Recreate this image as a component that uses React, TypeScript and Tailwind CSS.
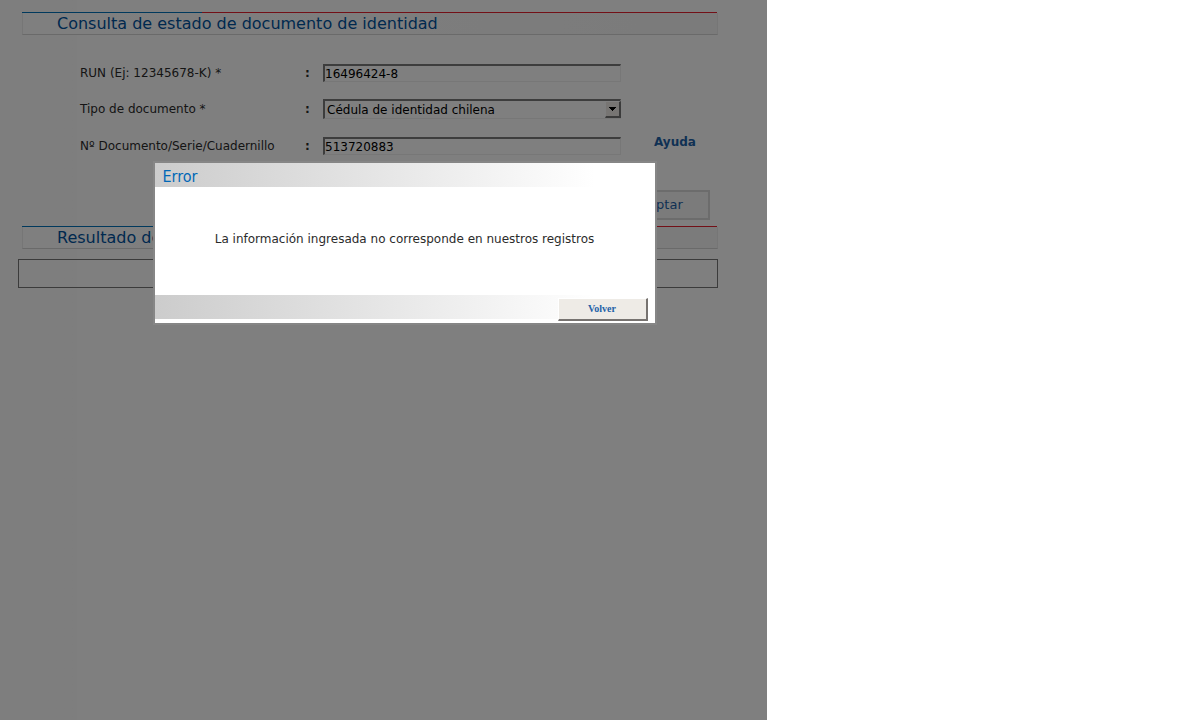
import type { ReactNode } from "react";

const fieldClass =
  "w-full rounded-none border border-t-2 border-l-2 border-[#efefef] border-t-[#7a7a7a] border-l-[#7a7a7a] bg-transparent text-[12px] text-black outline-none";

function SectionTitle({ children }: { children: ReactNode }) {
  return (
    <div className="ml-1 text-[#00539f]">
      <div className="flex h-px">
        <div className="w-[180px] bg-[#0072bb]" />
        <div className="mr-px flex-1 bg-[#e6212f]" />
      </div>
      <h2 className="h-[22px] border border-t-0 border-[#ececec] border-b-[#d4d4d4] bg-gradient-to-r from-white to-[#f6f6f6] pl-[34px] text-[16px] leading-[21px]">
        {children}
      </h2>
    </div>
  );
}

function FormRow({
  id,
  label,
  children,
  aside,
  height = "h-5",
}: {
  id: string;
  label: string;
  children: ReactNode;
  aside?: ReactNode;
  height?: string;
}) {
  return (
    <div className={`flex items-center ${height}`}>
      <label htmlFor={id} className="w-[225px] shrink-0 whitespace-nowrap">
        {label}
      </label>
      <span className="w-[18px] shrink-0 font-bold">:</span>
      <div className="w-[298px]">{children}</div>
      {aside}
    </div>
  );
}

export default function App() {
  return (
    <div className="min-h-screen bg-white font-['Verdana','DejaVu_Sans',sans-serif] text-[12px] text-[#2b2b2b]">
      <div className="relative min-h-screen w-full max-w-[767px] bg-gradient-to-r from-[#fcfcfc] from-[77px] to-white to-[77px]">
        <main className="pt-3 pr-[49px] pl-[18px]">
          <SectionTitle>Consulta de estado de documento de identidad</SectionTitle>
          <form className="mt-7" onSubmit={(e) => e.preventDefault()}>
            <div className="flex flex-col gap-4 pl-[62px]">
              <FormRow id="run" label="RUN (Ej: 12345678-K) *">
                <input id="run" defaultValue="16496424-8" className={`block h-[18px] ${fieldClass}`} />
              </FormRow>
              <FormRow id="tipo" label="Tipo de documento *">
                <div className="relative">
                  <select id="tipo" className={`block h-5 appearance-none pl-0.5 leading-4 ${fieldClass}`}>
                    <option>Cédula de identidad chilena</option>
                  </select>
                  <span className="pointer-events-none absolute top-0.5 right-0 flex h-[17px] w-4 items-center justify-center border border-r-2 border-b-2 border-white border-r-[#777777] border-b-[#777777] bg-[#eeebe6]">
                    <svg width="7" height="4" viewBox="0 0 7 4" shapeRendering="crispEdges">
                      <path d="M0 0H7V1H6V2H5V3H4V4H3V3H2V2H1V1H0Z" fill="#000000" />
                    </svg>
                  </span>
                </div>
              </FormRow>
              <FormRow
                id="numero"
                label="Nº Documento/Serie/Cuadernillo"
                height="h-[22px]"
                aside={
                  <a href="#ayuda" className="ml-[33px] self-start leading-[14px] font-bold text-[#1f62a8]">
                    Ayuda
                  </a>
                }
              >
                <input id="numero" defaultValue="513720883" className={`block h-[18px] ${fieldClass}`} />
              </FormRow>
            </div>
            <div className="mt-[33px] mb-1.5 flex justify-end pr-2">
              <button
                type="submit"
                className="h-[30px] w-[105px] border-2 border-[#d8d8d8] bg-[#f6f6f6] text-[13px] text-[#1f62a8]"
              >
                Aceptar
              </button>
            </div>
          </form>
          <SectionTitle>Resultado de</SectionTitle>
          <div className="mt-2.5 h-[29px] border border-[#777777]" />
        </main>

        <div className="absolute inset-0 bg-black/50">
          <div
            role="dialog"
            aria-modal="true"
            aria-labelledby="dialog-title"
            className="mx-auto mt-[161px] w-full max-w-[504px] translate-x-[21px] border-2 border-[#868686] bg-white"
          >
            <h1
              id="dialog-title"
              className="h-6 bg-gradient-to-r from-[#cccccc] to-white to-[88%] pl-2 font-['DejaVu_Sans_Condensed','DejaVu_Sans',sans-serif] text-[16px] leading-[28px] text-[#0068b7]"
            >
              Error
            </h1>
            <p className="flex h-[108px] items-center justify-center pb-1 text-center">
              La información ingresada no corresponde en nuestros registros
            </p>
            <div className="mb-1 flex h-6 justify-end bg-gradient-to-r from-[#cccccc] to-white to-[88%] pt-[3px] pr-[7px]">
              <button
                type="button"
                className="h-[23px] w-[90px] shrink-0 border border-r-2 border-b-2 border-white border-r-[#777370] border-b-[#777370] bg-[#eeebe6] pb-0.5 font-['Liberation_Serif',serif] text-[10px] font-bold text-[#1f62a8]"
              >
                Volver
              </button>
            </div>
          </div>
        </div>
      </div>
    </div>
  );
}
